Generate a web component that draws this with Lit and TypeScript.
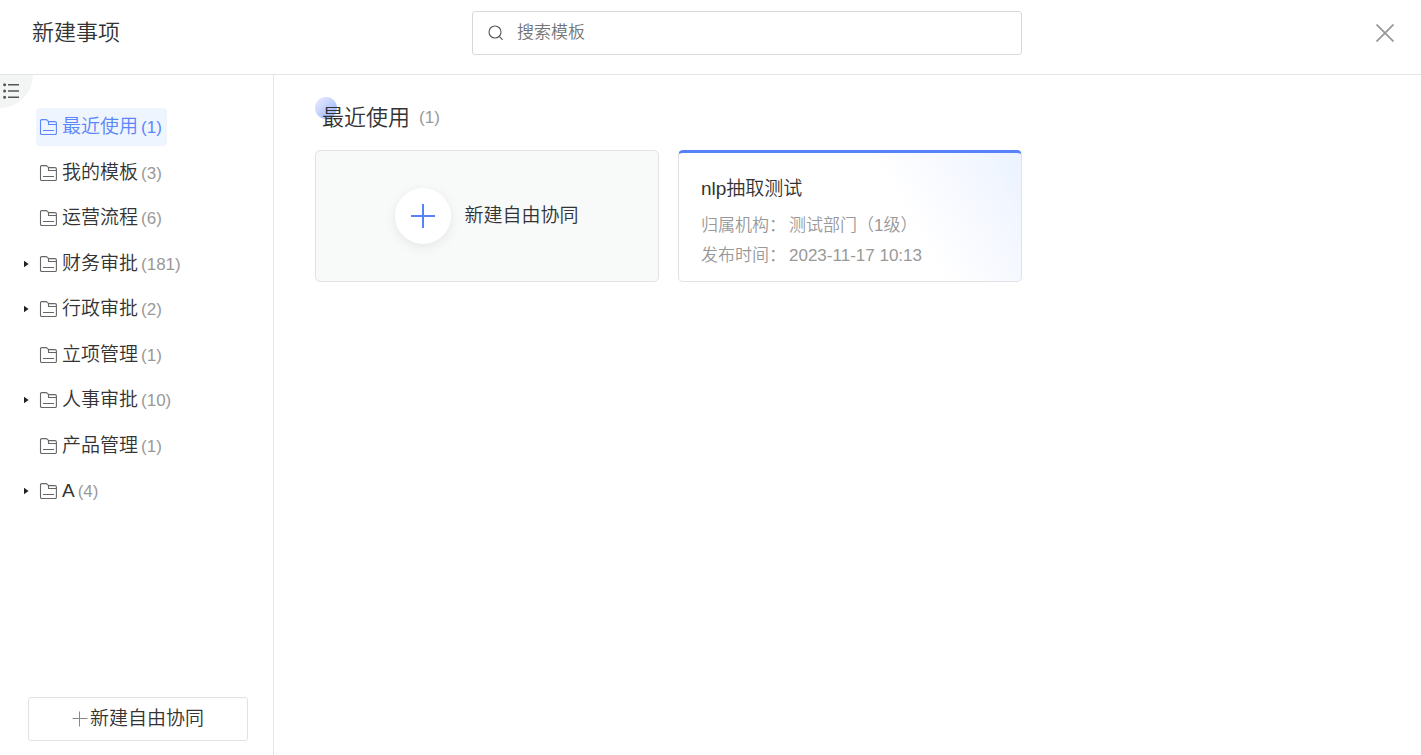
import { LitElement, html, css, svg, nothing } from "lit";
import { customElement, state } from "lit/decorators.js";
import { classMap } from "lit/directives/class-map.js";

interface Category {
  name: string;
  count: number;
  expandable?: boolean;
}

const CATEGORIES: Category[] = [
  { name: "最近使用", count: 1 },
  { name: "我的模板", count: 3 },
  { name: "运营流程", count: 6 },
  { name: "财务审批", count: 181, expandable: true },
  { name: "行政审批", count: 2, expandable: true },
  { name: "立项管理", count: 1 },
  { name: "人事审批", count: 10, expandable: true },
  { name: "产品管理", count: 1 },
  { name: "A", count: 4, expandable: true },
];

const folderShape = svg`
  <path d="M1.5 14.3V1.9Q1.5.6 2.8.6H6.9Q7.7.6 8.4 1.4L9.8 2.6H16Q17.4 2.6 17.4 4V14.3Q17.4 15.5 16.1 15.5H2.8Q1.5 15.5 1.5 14.3Z"/>
  <path d="M9.5 2.4V5.5H17.2M4 11.5H15"/>`;

@customElement("app-root")
export class AppRoot extends LitElement {
  static styles = css`
    :host {
      display: flex;
      flex-direction: column;
      min-height: 100vh;
      background: #fff;
      color: #333;
      font-family: "Liberation Sans", "Noto Sans CJK SC", sans-serif;
      font-weight: 350;
      font-size: 19px;
      line-height: 28px;
    }
    * {
      box-sizing: border-box;
    }
    button,
    input {
      font: inherit;
      color: inherit;
      margin: 0;
    }
    button {
      background: none;
      border: 0;
      padding: 0;
      cursor: pointer;
    }
    svg {
      display: block;
      flex: none;
      fill: none;
      stroke: currentColor;
    }
    h1,
    h2,
    h3,
    dl,
    dd,
    ul {
      margin: 0;
      padding: 0;
      font-weight: inherit;
    }
    .header {
      display: grid;
      grid-template-columns: 440px minmax(0, 550px) 1fr;
      align-items: center;
      padding: 11px 27px 19px 32px;
      border-bottom: 1px solid #e4e4e4;
    }
    .title,
    .section-title {
      font-size: 22px;
      line-height: 32px;
    }
    .search {
      display: flex;
      align-items: center;
      gap: 13px;
      height: 44px;
      padding: 0 15px;
      border: 1px solid #d9d9d9;
      border-radius: 3px;
      color: #555;
    }
    .search-input {
      flex: 1;
      min-width: 0;
      padding: 0;
      border: 0;
      outline: 0;
      background: none;
      font-size: 17px;
      line-height: 24px;
    }
    .search-input::placeholder {
      color: #757575;
      opacity: 1;
    }
    .close {
      justify-self: end;
      color: #999;
    }
    .body {
      flex: 1;
      display: flex;
    }
    .sidebar {
      position: relative;
      flex: none;
      display: flex;
      flex-direction: column;
      justify-content: space-between;
      width: 274px;
      padding: 33px 25px 14px 23px;
      border-right: 1px solid #e4e4e4;
    }
    .toggle {
      position: absolute;
      top: 0;
      left: 0;
      width: 33px;
      height: 33px;
      padding: 0 0 1px 3px;
      background: #f3f4f4;
      border-bottom-right-radius: 33px;
      color: #555;
    }
    .tree {
      display: flex;
      flex-direction: column;
      justify-content: space-between;
      min-height: 402px;
      list-style: none;
    }
    .node {
      display: grid;
      grid-template-columns: 13px auto;
      justify-content: start;
      align-items: center;
    }
    .arrow {
      color: #222;
    }
    .arrow svg {
      fill: currentColor;
      stroke: none;
    }
    .entry {
      grid-column: 2;
      display: flex;
      align-items: center;
      height: 38px;
      padding: 0 5px 0 3px;
      border-radius: 4px;
      white-space: nowrap;
    }
    .entry svg {
      margin-right: 5px;
      color: #666;
    }
    .count {
      margin-left: 3px;
      padding-top: 2px;
      color: #999;
      font-size: 17px;
    }
    .entry.active,
    .entry.active svg,
    .entry.active .count {
      color: #5b86fb;
    }
    .entry.active {
      background: #eff5ff;
    }
    .create {
      display: flex;
      align-items: center;
      justify-content: center;
      gap: 2px;
      height: 44px;
      margin-left: 5px;
      border: 1px solid #e2e2e2;
      border-radius: 3px;
    }
    .create svg {
      color: #888;
    }
    .main {
      flex: 1;
      min-width: 0;
      padding: 22px 36px 22px 41px;
    }
    .section-head {
      position: relative;
      display: flex;
      align-items: center;
      gap: 9px;
      padding: 5px 0 16px 7px;
    }
    .section-head::before {
      content: "";
      position: absolute;
      top: 0;
      left: 0;
      width: 22px;
      height: 22px;
      border-radius: 50%;
      background: linear-gradient(135deg, #dde3ff 20%, #8fb0fb);
    }
    .section-title {
      position: relative;
    }
    .section-count {
      color: #999;
      font-size: 17px;
    }
    .cards {
      display: grid;
      grid-template-columns: repeat(3, minmax(0, 1fr));
      gap: 19px;
    }
    .card {
      min-height: 132px;
      border: 1px solid #e0e3e3;
      border-radius: 5px;
    }
    .card-new {
      display: flex;
      align-items: center;
      justify-content: center;
      gap: 13px;
      background: #f8f9f9;
    }
    .plus {
      display: grid;
      place-items: center;
      width: 56px;
      height: 56px;
      border-radius: 50%;
      background: #fff;
      box-shadow: 0 3px 12px rgba(0, 0, 0, 0.08);
      color: #5882fa;
    }
    .card-template {
      padding: 22px 22px 10px;
      border-top: 3px solid #5882fa;
      background: linear-gradient(60deg, #fff 64%, #f7f9ff 80%, #ebf3ff);
    }
    .card-title {
      margin-bottom: 8px;
      font-size: 19px;
    }
    .meta {
      display: flex;
      gap: 3px;
      color: #999;
      font-size: 17px;
      line-height: 30px;
      white-space: nowrap;
    }
  `;

  @state() private selected = 0;

  private renderCategory(item: Category, index: number) {
    return html`<li class="node">
      ${item.expandable
        ? html`<button class="arrow" aria-label="展开${item.name}">
            <svg width="7" height="8" viewBox="0 0 7 8"><path d="M1 .8L5.6 4L1 7.2Z" /></svg>
          </button>`
        : nothing}
      <button
        class=${classMap({ entry: true, active: index === this.selected })}
        @click=${() => (this.selected = index)}
      >
        <svg width="18" height="16" viewBox="0 0 18 16" stroke-width="1.1">${folderShape}</svg>
        <span>${item.name}</span><span class="count">(${item.count})</span>
      </button>
    </li>`;
  }

  render() {
    return html`
      <header class="header">
        <h1 class="title">新建事项</h1>
        <label class="search">
          <svg width="16" height="16" viewBox="0 0 16 16" stroke-width="1.1" aria-hidden="true">
            <circle cx="7" cy="7" r="6" />
            <path d="M11.3 11.3L14.6 14.8" />
          </svg>
          <input class="search-input" type="text" placeholder="搜索模板" aria-label="搜索模板" />
        </label>
        <button class="close" aria-label="关闭">
          <svg width="18" height="18" viewBox="0 0 18 18" stroke-width="1.8"><path d="M.5.5L17.5 17.5M17.5.5L.5 17.5" /></svg>
        </button>
      </header>
      <div class="body">
        <nav class="sidebar">
          <button class="toggle" aria-label="收起目录">
            <svg width="16" height="16" viewBox="0 0 16 16" stroke-width="1.5">
              <path d="M5 1.7H16M5 8H16M5 14.3H16" />
              <path d="M1.6 1.7h.01M1.6 8h.01M1.6 14.3h.01" stroke-width="3" stroke-linecap="round" />
            </svg>
          </button>
          <ul class="tree">
            ${CATEGORIES.map((item, index) => this.renderCategory(item, index))}
          </ul>
          <button class="create">
            <svg width="16" height="16" viewBox="0 0 16 16" stroke-width="1"><path d="M7.5 .5V15.5M.5 7.5H15.5" /></svg>
            <span>新建自由协同</span>
          </button>
        </nav>
        <main class="main">
          <div class="section-head">
            <h2 class="section-title">最近使用</h2>
            <span class="section-count">(1)</span>
          </div>
          <div class="cards">
            <button class="card card-new">
              <span class="plus">
                <svg width="24" height="24" viewBox="0 0 24 24" stroke-width="2"><path d="M12 0V24M0 12H24" /></svg>
              </span>
              <span>新建自由协同</span>
            </button>
            <article class="card card-template">
              <h3 class="card-title">nlp抽取测试</h3>
              <dl>
                <div class="meta"><dt>归属机构：</dt><dd>测试部门（1级）</dd></div>
                <div class="meta"><dt>发布时间：</dt><dd>2023-11-17 10:13</dd></div>
              </dl>
            </article>
          </div>
        </main>
      </div>
    `;
  }
}
